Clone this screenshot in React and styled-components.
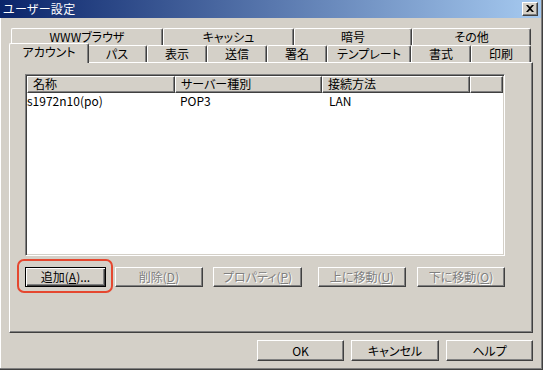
import React from 'react';
import styled, { createGlobalStyle } from 'styled-components';

const GlobalStyle = createGlobalStyle`
  html, body {
    margin: 0;
    padding: 0;
    background: #d4d0c8;
  }
  * { box-sizing: border-box; }
`;

const FONT = `"Noto Sans CJK JP", "Liberation Sans", sans-serif`;

const Window = styled.div`
  width: 543px;
  height: 370px;
  background: #d4d0c8;
  border-right: 1px solid #404040;
  border-bottom: 1px solid #404040;
  box-shadow: inset -1px -1px 0 #808080;
  padding: 0 1px 1px 0;
  display: flex;
  flex-direction: column;
  font-family: ${FONT};
  font-size: 12px;
  font-feature-settings: "palt";
  color: #000;
`;

const TitleBar = styled.div`
  height: 18px;
  flex: none;
  display: flex;
  align-items: center;
  justify-content: space-between;
  padding: 0 3px 0 3px;
  background: linear-gradient(to right, #0a246a, #a6caf0);
`;

const Title = styled.span`
  color: #fff;
  font-size: 12px;
  line-height: 16px;
  letter-spacing: 0.3px;
`;

const CloseButton = styled.div`
  width: 16px;
  height: 14px;
  background: #d4d0c8;
  border: 1px solid;
  border-color: #fff #404040 #404040 #fff;
  box-shadow: inset -1px -1px 0 #808080;
  display: flex;
  align-items: center;
  justify-content: center;
  padding: 0 1px 1px 0;
`;

const Body = styled.div`
  flex: 1;
  display: flex;
  flex-direction: column;
  border-left: 1px solid #fff;
  padding: 10px 0 0 8px;
`;

const TabRow = styled.div`
  display: flex;
  align-items: flex-end;
  height: 17px;
  margin: 0 2px;
`;

const Tab = styled.div`
  flex: none;
  width: ${p => p.$w}px;
  height: ${p => (p.$active ? 20 : 17)}px;
  margin: ${p => (p.$active ? '0 -2px -1px -2px' : '0')};
  ${p => p.$active && 'width: ' + (p.$w + 4) + 'px;'}
  position: relative;
  z-index: ${p => (p.$active ? 2 : 1)};
  background: #d4d0c8;
  border-top: 1px solid #fff;
  border-left: 1px solid #fff;
  border-right: 1px solid #404040;
  border-radius: 2px 2px 0 0;
  box-shadow: inset -1px 0 0 #808080;
  display: flex;
  align-items: center;
  justify-content: center;
  padding-bottom: ${p => (p.$active ? 3 : 0)}px;
  line-height: 14px;
  white-space: nowrap;
`;

const Panel = styled.div`
  width: 524px;
  height: 271px;
  flex: none;
  background: #d4d0c8;
  border-top: 1px solid #fff;
  border-left: 1px solid #fff;
  border-right: 1px solid #404040;
  border-bottom: 1px solid #404040;
  box-shadow: inset -1px -1px 0 #808080;
  padding: 11px 0 0 15px;
`;

const ListView = styled.div`
  width: 480px;
  height: 182px;
  background: #fff;
  border: 1px solid;
  border-color: #808080 #fff #fff #808080;
  box-shadow: inset 1px 1px 0 #404040, inset -1px -1px 0 #d4d0c8;
  padding: 1px;
  display: flex;
  flex-direction: column;
`;

const HeaderRow = styled.div`
  display: flex;
  height: 17px;
`;

const HeaderCell = styled.div`
  flex: ${p => (p.$w ? 'none' : '1')};
  width: ${p => (p.$w ? p.$w + 'px' : 'auto')};
  background: #d4d0c8;
  border-top: 1px solid #fff;
  border-left: 1px solid #fff;
  border-right: 1px solid #404040;
  border-bottom: 1px solid #404040;
  box-shadow: inset -1px -1px 0 #808080;
  padding-left: 5px;
  line-height: 14px;
  white-space: nowrap;
`;

const Row = styled.div`
  display: flex;
  height: 15px;
  line-height: 15px;
`;

const Cell = styled.div`
  flex: none;
  width: ${p => p.$w}px;
  padding-left: ${p => p.$pl}px;
  white-space: nowrap;
`;

const ButtonRow = styled.div`
  display: flex;
  margin-top: 11px;
`;

const Button = styled.div`
  flex: none;
  position: relative;
  width: ${p => p.$w}px;
  height: ${p => p.$h || 20}px;
  margin-left: ${p => p.$ml || 0}px;
  background: #d4d0c8;
  border: 1px solid;
  border-color: #fff #404040 #404040 #fff;
  box-shadow: inset -1px -1px 0 #808080;
  display: flex;
  align-items: center;
  justify-content: center;
  line-height: 14px;
  white-space: nowrap;
  color: ${p => (p.$disabled ? '#808080' : '#000')};
  text-shadow: ${p => (p.$disabled ? '1px 1px 0 #fff' : 'none')};
`;

const DefaultButton = styled(Button)`
  border: 1px solid #000;
  box-shadow: inset 1px 1px 0 #fff, inset -1px -1px 0 #404040, inset -2px -2px 0 #808080;

  &::after {
    content: '';
    position: absolute;
    top: -9px;
    left: -9px;
    right: -8px;
    bottom: -7px;
    border: 2px solid #e5472f;
    border-radius: 7px;
  }
`;

const Footer = styled.div`
  display: flex;
  justify-content: flex-end;
  gap: 7px;
  width: 524px;
  margin-top: 7px;
`;

const U = styled.span`
  text-decoration: underline;
  text-underline-offset: 1px;
`;

const row1 = [
  ['WWWブラウザ', 152],
  ['キャッシュ', 131],
  ['暗号', 118],
  ['その他', 119],
];

const row2 = [
  ['アカウント', 76],
  ['パス', 60],
  ['表示', 60],
  ['送信', 60],
  ['署名', 60],
  ['テンプレート', 84],
  ['書式', 60],
  ['印刷', 60],
];

export default function App() {
  return (
    <>
      <GlobalStyle />
      <Window>
        <TitleBar>
          <Title>ユーザー設定</Title>
          <CloseButton>
            <svg width="8" height="7" viewBox="0 0 8 7">
              <path d="M0 0h2l2 2 2-2h2L5 3.5 8 7H6L4 5 2 7H0l3-3.5z" fill="#000" />
            </svg>
          </CloseButton>
        </TitleBar>
        <Body>
          <TabRow>
            {row1.map(([label, w]) => (
              <Tab key={label} $w={w}>{label}</Tab>
            ))}
          </TabRow>
          <TabRow>
            {row2.map(([label, w], i) => (
              <Tab key={label} $w={w} $active={i === 0}>{label}</Tab>
            ))}
          </TabRow>
          <Panel>
            <ListView>
              <HeaderRow>
                <HeaderCell $w={148}>名称</HeaderCell>
                <HeaderCell $w={147}>サーバー種別</HeaderCell>
                <HeaderCell $w={148}>接続方法</HeaderCell>
                <HeaderCell />
              </HeaderRow>
              <Row>
                <Cell $w={148} $pl={0}>s1972n10(po)</Cell>
                <Cell $w={147} $pl={5}>POP3</Cell>
                <Cell $w={148} $pl={7}>LAN</Cell>
              </Row>
            </ListView>
            <ButtonRow>
              <DefaultButton $w={81}>追加(<U>A</U>)...</DefaultButton>
              <Button $w={88} $ml={9} $disabled>削除(<U>D</U>)</Button>
              <Button $w={89} $ml={10} $disabled>プロパティ(<U>P</U>)</Button>
              <Button $w={88} $ml={16} $disabled>上に移動(<U>U</U>)</Button>
              <Button $w={88} $ml={11} $disabled>下に移動(<U>O</U>)</Button>
            </ButtonRow>
          </Panel>
          <Footer>
            <Button $w={87} $h={21}>OK</Button>
            <Button $w={88} $h={21}>キャンセル</Button>
            <Button $w={87} $h={21}>ヘルプ</Button>
          </Footer>
        </Body>
      </Window>
    </>
  );
}
